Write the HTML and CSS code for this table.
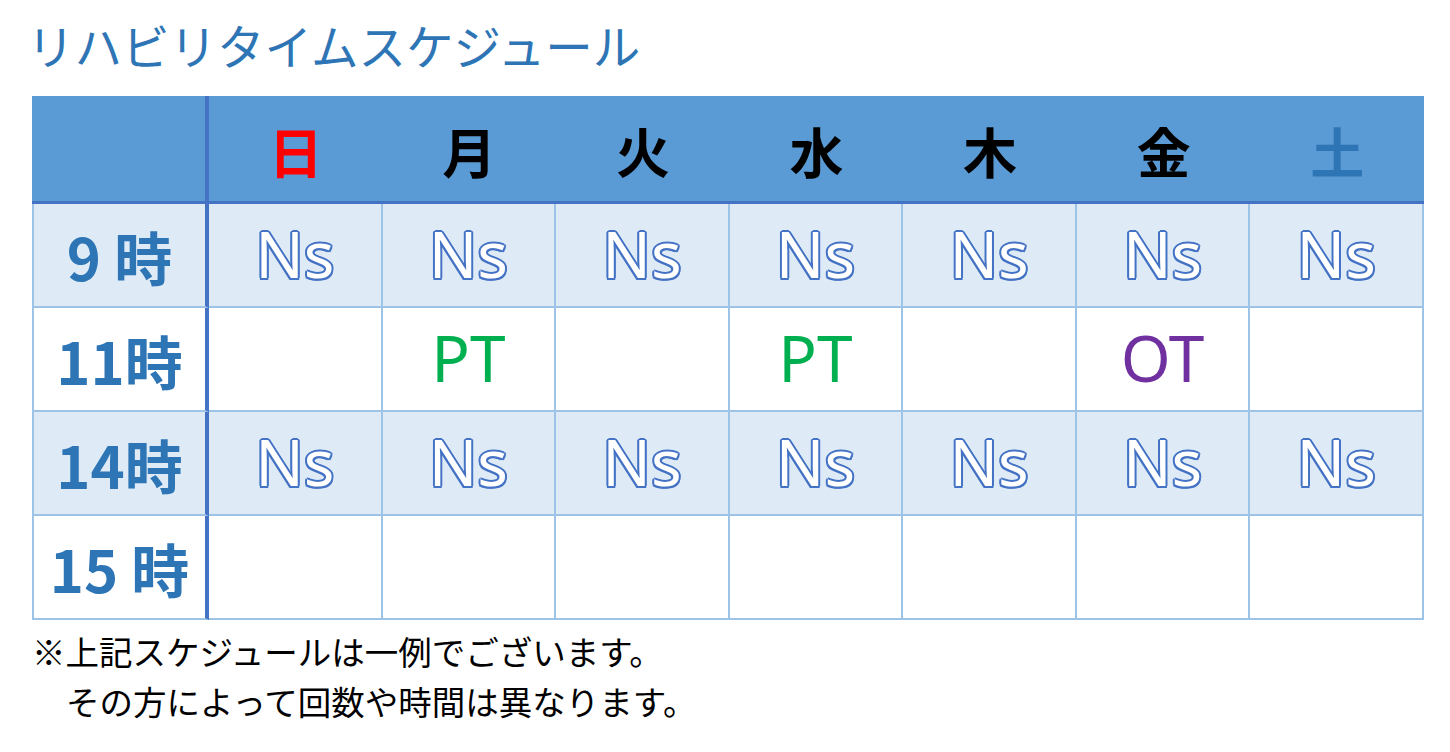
FILE: index.html
```html
<!DOCTYPE html>
<html lang="ja">
<head>
<meta charset="utf-8">
<title>リハビリタイムスケジュール</title>
<link rel="stylesheet" href="styles.css">
</head>
<body>
<div class="page">
  <h1 class="title">リハビリタイムスケジュール</h1>
  <div class="sched">
    <div class="hd corner"></div>
    <div class="hd sun">日</div>
    <div class="hd">月</div>
    <div class="hd">火</div>
    <div class="hd">水</div>
    <div class="hd">木</div>
    <div class="hd">金</div>
    <div class="hd sat">土</div>

    <div class="cell label shade">9 時</div>
    <div class="cell shade ns">Ns</div>
    <div class="cell shade ns">Ns</div>
    <div class="cell shade ns">Ns</div>
    <div class="cell shade ns">Ns</div>
    <div class="cell shade ns">Ns</div>
    <div class="cell shade ns">Ns</div>
    <div class="cell shade ns">Ns</div>

    <div class="cell label">11時</div>
    <div class="cell"></div>
    <div class="cell pt">PT</div>
    <div class="cell"></div>
    <div class="cell pt">PT</div>
    <div class="cell"></div>
    <div class="cell ot">OT</div>
    <div class="cell"></div>

    <div class="cell label shade">14時</div>
    <div class="cell shade ns">Ns</div>
    <div class="cell shade ns">Ns</div>
    <div class="cell shade ns">Ns</div>
    <div class="cell shade ns">Ns</div>
    <div class="cell shade ns">Ns</div>
    <div class="cell shade ns">Ns</div>
    <div class="cell shade ns">Ns</div>

    <div class="cell label">15 時</div>
    <div class="cell"></div>
    <div class="cell"></div>
    <div class="cell"></div>
    <div class="cell"></div>
    <div class="cell"></div>
    <div class="cell"></div>
    <div class="cell"></div>
  </div>
  <div class="notes">
    <p>※上記スケジュールは一例でございます。</p>
    <p class="indent">その方によって回数や時間は異なります。</p>
  </div>
</div>
</body>
</html>
```

FILE: styles.css
```css
* { box-sizing: border-box; }
html, body { margin: 0; padding: 0; background: #fff; }
body { font-family: "Noto Sans CJK JP", "Noto Sans", sans-serif; }

.page {
  padding: 20px 0 0 32px;
}

.title {
  margin: 0 0 26px -5px;
  font-size: 47.5px;
  line-height: 50px;
  height: 50px;
  font-weight: 400;
  color: #2e75b6;
  letter-spacing: 0;
}

.sched {
  display: grid;
  width: 1392px;
  grid-template-columns: 177px repeat(7, 1fr);
  grid-template-rows: 108px repeat(4, 104px);
}

.hd {
  background: #5b9bd5;
  border-bottom: 3px solid #4472c4;
  display: flex;
  align-items: center;
  justify-content: center;
  font-size: 54px;
  font-weight: 700;
  color: #000;
  padding-top: 4px;
}
.hd.corner { border-right: 4px solid #4472c4; }
.hd.sun { color: #ff0000; }
.hd.sat { color: #2e75b6; }

.cell {
  background: #fff;
  border-right: 2px solid #9dc3e6;
  border-bottom: 2px solid #9dc3e6;
  display: flex;
  align-items: center;
  justify-content: center;
}
.cell.shade { background: #deebf7; }

.cell.label {
  border-left: 2px solid #9dc3e6;
  border-right: 4px solid #4472c4;
  font-size: 58px;
  font-weight: 700;
  color: #2e75b6;
  padding-top: 2px;
}

.ns {
  font-family: "Noto Sans", sans-serif;
  font-size: 64px;
  color: #fff;
  padding-bottom: 4px;
  text-shadow:
    2px 0 0 #4472c4, -2px 0 0 #4472c4, 0 2px 0 #4472c4, 0 -2px 0 #4472c4,
    1.5px 1.5px 0 #4472c4, -1.5px 1.5px 0 #4472c4, 1.5px -1.5px 0 #4472c4, -1.5px -1.5px 0 #4472c4,
    0 0 2px #4472c4;
}

.pt, .ot {
  font-family: "Noto Sans", sans-serif;
  font-size: 64px;
  padding-bottom: 4px;
}
.pt { color: #00b050; }
.ot { color: #7030a0; }

.notes {
  padding-top: 6px;
  font-size: 33.5px;
  line-height: 50px;
  color: #000;
}
.notes p { margin: 0; }
.notes .indent { padding-left: 34px; }
```
